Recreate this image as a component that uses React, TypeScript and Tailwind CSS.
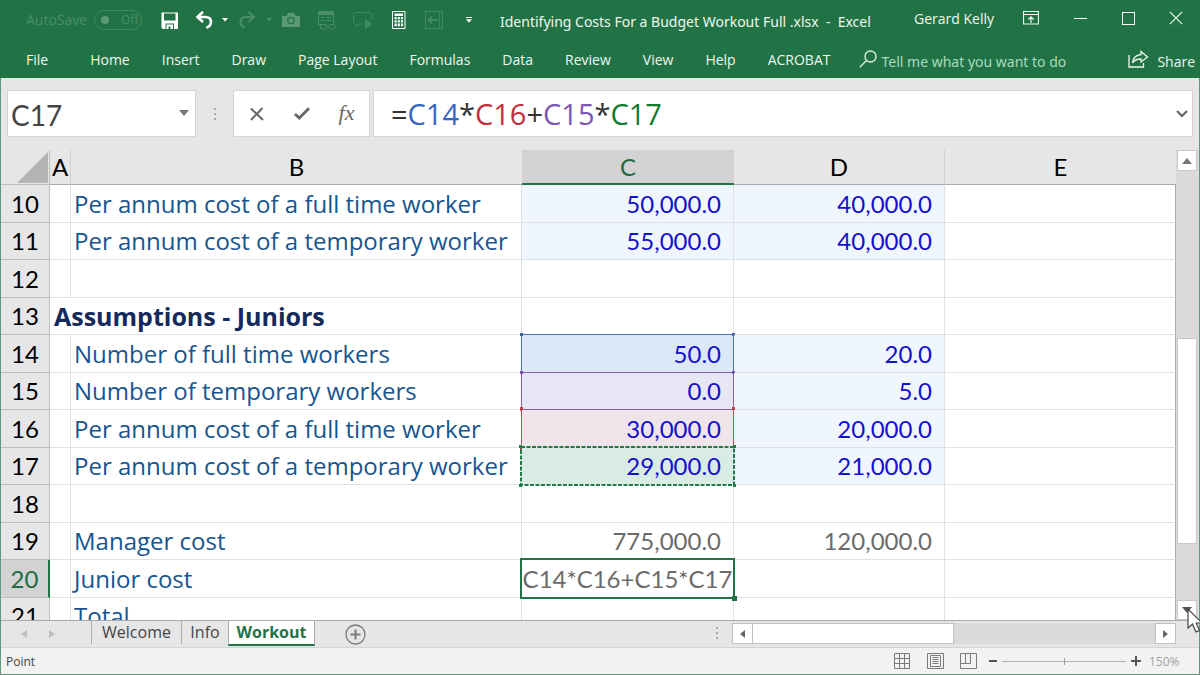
import React from "react";

type Tint = "input" | "blue" | "purple" | "red" | "green";

interface Cell {
  text: string;
  tint?: Tint;
  calculated?: boolean;
  editing?: boolean;
}

interface Row {
  n: number;
  label?: string;
  heading?: boolean;
  c?: Cell;
  d?: Cell;
}

const rows: Row[] = [
  { n: 10, label: "Per annum cost of a full time worker", c: { text: "50,000.0", tint: "input" }, d: { text: "40,000.0", tint: "input" } },
  { n: 11, label: "Per annum cost of a temporary worker", c: { text: "55,000.0", tint: "input" }, d: { text: "40,000.0", tint: "input" } },
  { n: 12 },
  { n: 13, label: "Assumptions - Juniors", heading: true },
  { n: 14, label: "Number of full time workers", c: { text: "50.0", tint: "blue" }, d: { text: "20.0", tint: "input" } },
  { n: 15, label: "Number of temporary workers", c: { text: "0.0", tint: "purple" }, d: { text: "5.0", tint: "input" } },
  { n: 16, label: "Per annum cost of a full time worker", c: { text: "30,000.0", tint: "red" }, d: { text: "20,000.0", tint: "input" } },
  { n: 17, label: "Per annum cost of a temporary worker", c: { text: "29,000.0", tint: "green" }, d: { text: "21,000.0", tint: "input" } },
  { n: 18 },
  { n: 19, label: "Manager cost", c: { text: "775,000.0", calculated: true }, d: { text: "120,000.0", calculated: true } },
  { n: 20, label: "Junior cost", c: { text: "C14*C16+C15*C17", calculated: true, editing: true } },
  { n: 21, label: "Total" },
];

const fills: Record<Tint, string> = {
  input: "bg-[#f0f6fe]",
  blue: "bg-[#dce8f7]",
  purple: "bg-[#e6e6f5]",
  red: "bg-[#eee4ea]",
  green: "bg-[#d9ebe5]",
};

const outlines: Record<Tint, string> = {
  input: "",
  blue: "border border-[#4a72b8]",
  purple: "border border-[#8461ad]",
  red: "border-x border-[#c0504d]",
  green: "z-10",
};

const handles: Record<Tint, string> = {
  input: "",
  blue: "bg-[#3b62a8]",
  purple: "bg-[#7b52a5]",
  red: "bg-[#b8434a]",
  green: "bg-[#1f7a45]",
};

function Outline({ tint }: { tint: Tint }) {
  if (tint === "input") return null;
  const dot = `absolute size-[3px] ${handles[tint]}`;
  return (
    <span className={`pointer-events-none absolute -inset-px ${outlines[tint]}`}>
      {tint === "green" && (
        <svg className="absolute inset-0 h-full w-full overflow-visible" aria-hidden="true">
          <rect width="100%" height="100%" fill="none" stroke="#1f7a45" strokeWidth="2" strokeDasharray="4 1.5" />
        </svg>
      )}
      <span className={`${dot} -left-0.5 -top-0.5`} />
      <span className={`${dot} -right-0.5 -top-0.5`} />
      <span className={`${dot} -bottom-0.5 -left-0.5`} />
      <span className={`${dot} -bottom-0.5 -right-0.5`} />
    </span>
  );
}

function ValueCell({ cell }: { cell?: Cell }) {
  const base = "relative whitespace-nowrap border-b border-r border-[#dfe2e5] p-0 text-right";
  if (!cell) return <td className={base} />;
  const ink = cell.calculated ? "text-[#6b6b6b]" : "text-[#1510cc]";
  const fill = cell.tint ? fills[cell.tint] : "";
  return (
    <td className={`${base} ${ink} ${fill} ${cell.editing ? "" : "pr-3"}`}>
      {cell.editing ? (
        <>
          <span className="pointer-events-none absolute -inset-0.5 z-10 border-2 border-[#217346]">
            <span className="absolute -bottom-1 -right-1 size-[5px] bg-[#217346]" />
          </span>
          <span className="flex justify-center">{cell.text}</span>
        </>
      ) : (
        cell.text
      )}
      {cell.tint && <Outline tint={cell.tint} />}
    </td>
  );
}

function SheetRow({ row }: { row: Row }) {
  const active = row.n === 20;
  return (
    <tr className="h-[38px] even:h-[37px]">
      <th
        scope="row"
        className={`border-b border-[#bfbfbf] p-0 text-center font-normal ${
          active ? "border-r-2 border-r-[#217346] bg-[#d2d2d2] text-[#1f6b41]" : "border-r bg-[#e6e6e6] text-black"
        }`}
      >
        {row.n}
      </th>
      {row.heading ? (
        <td
          colSpan={2}
          className="whitespace-nowrap border-b border-r border-[#dfe2e5] p-0 pl-1 font-['Open_Sans',sans-serif] text-[25px] font-bold text-[#14295c]"
        >
          {row.label}
        </td>
      ) : (
        <>
          <td className="border-b border-r border-[#dfe2e5] p-0" />
          <td className="whitespace-nowrap border-b border-r border-[#dfe2e5] p-0 pl-[3px] font-['Open_Sans',sans-serif] text-[#17558f]">
            {row.label}
          </td>
        </>
      )}
      <ValueCell cell={row.c} />
      <ValueCell cell={row.d} />
      <td className="border-b border-r border-[#dfe2e5] border-r-[#ababab] p-0" />
    </tr>
  );
}

function Caret({ className }: { className: string }) {
  return (
    <svg viewBox="0 0 6 4" className={className} fill="currentColor" aria-hidden="true">
      <path d="M0 0h6L3 3.6z" />
    </svg>
  );
}

function QuickAccess() {
  return (
    <div className="flex items-center text-white">
      <button aria-label="Save" className="flex w-9 justify-center">
        <svg viewBox="0 0 17 17" className="size-[17px]" aria-hidden="true">
          <path d="M.5.5H17v16.500H2L.5 15.500z" fill="currentColor" />
          <path d="M3 1.500h11.500v7H3zM4.500 11.500h8.500V17H4.500z" fill="#217346" />
          <path d="M5.500 12.500h6.500V17H9.500v-2.500h-2V17h-2z" fill="currentColor" />
        </svg>
      </button>
      <button aria-label="Undo" className="flex w-[34px] justify-center">
        <svg viewBox="0 0 18 18" className="size-[18px]" fill="none" stroke="currentColor" strokeWidth="2.600" aria-hidden="true">
          <path d="M8 .8 2.500 6 8 11" />
          <path d="M3 6h7.200c3.600 0 5.800 2 5.800 5 0 2.700-1.500 4.500-4.700 5.700" />
        </svg>
      </button>
      <button aria-label="Undo history" className="flex w-2 justify-center">
        <Caret className="w-1.5" />
      </button>
      <button aria-label="Redo" className="flex w-9 justify-center text-[#4a8d68]">
        <svg viewBox="0 0 18 18" className="size-[18px]" fill="none" stroke="currentColor" strokeWidth="2.200" aria-hidden="true">
          <path d="m10.500 1 5.500 5-5.500 5" />
          <path d="M15.500 6H8.300c-3.600 0-5.800 2-5.800 5 0 2.700 1.500 4.500 4.200 5.700" />
        </svg>
      </button>
      <button aria-label="Redo history" className="flex w-2 justify-center text-[#4a8d68]">
        <Caret className="w-1.5" />
      </button>
      <button aria-label="Camera" className="flex w-9 justify-center text-[#5b9876]">
        <svg viewBox="0 0 18 14" className="w-[18px]" aria-hidden="true">
          <path d="M0 3h4.500L6 0h6l1.500 3H18v11H0z" fill="currentColor" />
          <circle cx="9" cy="7.500" r="3.800" fill="#217346" />
          <circle cx="9" cy="7.500" r="2.500" fill="currentColor" />
        </svg>
      </button>
      <button aria-label="Watch window" className="flex w-9 justify-center text-[#4a8d68]">
        <svg viewBox="0 0 18 19" className="w-[18px]" fill="none" stroke="currentColor" aria-hidden="true">
          <path d="M.5.5h15v12M.5.500v13H3M3 6.500h3M8 6.500h5M3 9.500h3M8 9.500h5" />
          <path d="M1 1h14v2.500H1z" fill="currentColor" />
          <rect x="2.500" y="13.500" width="6" height="4.500" rx="1.500" />
          <rect x="11" y="13.500" width="6" height="4.500" rx="1.500" />
          <path d="M8.500 15H11" />
        </svg>
      </button>
      <button aria-label="Select objects" className="flex w-9 justify-center text-[#438961]">
        <svg viewBox="0 0 20 18" className="w-5" fill="none" stroke="currentColor" aria-hidden="true">
          <path d="M10 13H5.500L3 15.500V13c-1.500 0-2.500-1-2.500-2.500v-6C.5 2.500 1.500 1.500 3 1.500h13c1.500 0 2.500 1 2.500 3V9" />
          <path d="M12.500 8.500v9l6-4.500z" fill="currentColor" />
        </svg>
      </button>
      <button aria-label="Calculator" className="flex w-[35px] justify-center">
        <svg viewBox="0 0 14 18" className="w-3.5" aria-hidden="true">
          <path d="M.5.5h12.500v17H.5z" fill="none" stroke="currentColor" />
          <path
            d="M2.500 2.500H11v2.500H2.500zM2.500 6h2.200v2.200H2.500zM5.700 6h2.200v2.200H5.700zM8.900 6H11v2.200H8.900zM2.500 9.300h2.200v2.200H2.500zM5.700 9.300h2.200v2.200H5.700zM8.900 9.300H11v2.200H8.900zM2.500 12.600h2.200v2.700H2.500zM5.700 12.600h2.200v2.700H5.700zM8.900 12.600H11v2.700H8.900z"
            fill="currentColor"
          />
        </svg>
      </button>
      <button aria-label="Precedents" className="flex w-[35px] justify-center text-[#438961]">
        <svg viewBox="0 0 18 18" className="w-[18px]" fill="none" stroke="currentColor" aria-hidden="true">
          <path d="M.5.500h17v17H.500zM14.500.5v17" />
          <path d="M12.500 9H4M7 5.500 3.500 9 7 12.500" strokeWidth="2" />
        </svg>
      </button>
      <button aria-label="Customize toolbar" className="flex w-[35px] justify-center">
        <svg viewBox="0 0 6 6" className="w-1.5" fill="currentColor" aria-hidden="true">
          <path d="M0 0h6v1H0zM0 2.300h6L3 5.800z" />
        </svg>
      </button>
    </div>
  );
}

function TitleBar() {
  return (
    <div className="flex h-10 items-center">
      <div className="flex w-[151px] shrink-0 items-center gap-1 pl-[26px] text-[#4a8d68]">
        <span className="w-16">AutoSave</span>
        <button
          role="switch"
          aria-checked="false"
          aria-label="AutoSave"
          className="flex h-5 w-12 items-center gap-3 rounded-full border border-[#438961] pl-1.5 text-xs"
        >
          <span className="size-2 rounded-full bg-[#5b9876]" />
          Off
        </button>
      </div>
      <QuickAccess />
      <h1 className="min-w-0 flex-1 whitespace-pre pl-3.5 pt-1 font-['Noto_Sans',sans-serif] font-normal">
        {"Identifying Costs For a Budget Workout Full .xlsx  -  Excel"}
      </h1>
      <button className="mr-2.5 w-[82px] whitespace-nowrap pb-0.5 text-left">Gerard Kelly</button>
      <div className="flex items-center pb-1">
        <button aria-label="Ribbon display options" className="flex w-[50px] justify-center">
          <svg viewBox="0 0 16 14" className="w-4" fill="none" stroke="currentColor" aria-hidden="true">
            <path d="M.5.500h15v12.500H.500zM.5 3.500h15M8 12V6M5.300 8.500 8 5.800l2.700 2.700" strokeWidth="1.200" />
          </svg>
        </button>
        <button aria-label="Minimize" className="flex w-12 justify-center">
          <span className="h-px w-[13px] bg-white" />
        </button>
        <button aria-label="Maximize" className="flex w-12 justify-center">
          <span className="size-[13px] border border-white" />
        </button>
        <button aria-label="Close" className="flex w-12 justify-center">
          <svg viewBox="0 0 14 14" className="w-3.5" stroke="currentColor" strokeWidth="1.200" aria-hidden="true">
            <path d="m.8.8 12.400 12.400M13.200.8.800 13.200" />
          </svg>
        </button>
      </div>
    </div>
  );
}

const ribbonTabs = ["Home", "Insert", "Draw", "Page Layout", "Formulas", "Data", "Review", "View", "Help", "ACROBAT"];

function Ribbon() {
  return (
    <div className="flex h-[38px] items-center whitespace-nowrap pl-[26px] pr-[5px]">
      <button className="mr-[42px] pt-0.5">File</button>
      <nav className="flex gap-8 pt-0.5">
        {ribbonTabs.map((t) => (
          <button key={t}>{t}</button>
        ))}
      </nav>
      <label className="ml-[29px] flex min-w-0 flex-1 items-center gap-1 text-[#a9dabf]">
        <svg viewBox="0 0 18 18" className="size-[18px] shrink-0 text-[#d5ecdf]" fill="none" stroke="currentColor" strokeWidth="1.400" aria-hidden="true">
          <circle cx="11.500" cy="6.500" r="5.500" />
          <path d="M7.500 10.500.8 17.300" />
        </svg>
        <input
          aria-label="Tell me what you want to do"
          placeholder="Tell me what you want to do"
          className="w-full min-w-0 bg-transparent pt-1.5 font-['Noto_Sans',sans-serif] outline-none placeholder:text-[#a9dabf]"
        />
      </label>
      <button className="flex items-center gap-2">
        <svg viewBox="0 0 21 18" className="w-[21px]" fill="none" stroke="currentColor" strokeWidth="1.300" aria-hidden="true">
          <path d="M1 5v12h14.500v-4" />
          <path d="M13 1.500 19.500 7 13 12V9c-4 0-6.500 1-8.500 4 .5-5 3.500-8 8.500-8.500z" />
        </svg>
        <span className="pt-1.5">Share</span>
      </button>
    </div>
  );
}

function Grip() {
  return (
    <span className="flex flex-col gap-[3px]" aria-hidden="true">
      <span className="size-0.5 bg-[#a6a6a6]" />
      <span className="size-0.5 bg-[#a6a6a6]" />
      <span className="size-0.5 bg-[#a6a6a6]" />
    </span>
  );
}

function FormulaBar() {
  return (
    <div className="flex h-[72px] items-start pl-1.5 pr-1.5 pt-3">
      <div className="flex h-[47px] w-[189px] items-center border border-[#d4d4d4] bg-white pl-[3px] pr-1.5">
        <input
          aria-label="Name box"
          defaultValue="C17"
          className="w-full min-w-0 bg-transparent pt-0.5 font-[Lato,sans-serif] text-[28px] text-[#444] outline-none"
        />
        <button aria-label="Open name list" className="text-[#777]">
          <Caret className="w-2.5" />
        </button>
      </div>
      <div className="flex h-[47px] w-[37px] items-center justify-center">
        <Grip />
      </div>
      <div className="mr-[3px] flex h-[47px] w-[137px] items-center border border-[#d4d4d4] bg-white text-[#666]">
        <button aria-label="Cancel" className="flex flex-1 justify-center">
          <svg viewBox="0 0 14 14" className="w-3.5" fill="none" stroke="currentColor" strokeWidth="2" aria-hidden="true">
            <path d="m1 1.500 12 11.500M12.500 1 1 13" />
          </svg>
        </button>
        <button aria-label="Enter" className="flex flex-1 justify-center">
          <svg viewBox="0 0 16 13" className="w-4" fill="none" stroke="currentColor" strokeWidth="2.800" aria-hidden="true">
            <path d="m1 7 4.300 4L15 1.200" />
          </svg>
        </button>
        <button aria-label="Insert function" className="flex-1 pb-0.5 font-[Liberation_Serif,serif] text-[22px] italic">
          fx
        </button>
      </div>
      <div className="flex h-[47px] min-w-0 flex-1 items-center border border-[#d4d4d4] bg-white pl-[17px] pr-1">
        <div
          role="textbox"
          aria-label="Formula"
          contentEditable
          suppressContentEditableWarning
          className="flex-1 whitespace-nowrap text-[29px] leading-[45px] text-[#333] outline-none"
        >
          =<span className="text-[#3566c4]">C14</span>*<span className="text-[#c02f3a]">C16</span>+
          <span className="text-[#7e57b5]">C15</span>*<span className="text-[#0f7a2c]">C17</span>
        </div>
        <button aria-label="Expand formula bar" className="text-[#666]">
          <svg viewBox="0 0 12 8" className="w-3" fill="none" stroke="currentColor" strokeWidth="2.200" aria-hidden="true">
            <path d="m1 1 5 5 5-5" />
          </svg>
        </button>
      </div>
    </div>
  );
}

function Sheet() {
  return (
    <div className="flex min-h-0 flex-1 border-b border-[#ababab]">
      <div className="min-w-0 flex-1 overflow-hidden">
        <table className="w-full table-fixed border-separate border-spacing-0 bg-white font-[Lato,sans-serif] text-2xl leading-8 [font-variant-ligatures:none]">
          <colgroup>
            <col className="w-[49px]" />
            <col className="w-[21px]" />
            <col className="w-[451px]" />
            <col className="w-[212px]" />
            <col className="w-[211px]" />
            <col />
          </colgroup>
          <thead>
            <tr className="h-[35px] bg-[#e6e6e6] text-black">
              <th className="border-b border-r border-[#bfbfbf] p-0">
                <svg viewBox="0 0 31 31" className="ml-4 w-[31px]" aria-label="Select all">
                  <path d="M31 0v31H0z" fill="#b4b4b4" />
                </svg>
              </th>
              <th className="border-b border-r border-b-[#ababab] border-r-[#cfcfcf] p-0 font-normal">A</th>
              <th className="border-b border-b-[#ababab] p-0 font-normal">B</th>
              <th className="border-b-2 border-b-[#217346] bg-[#d2d2d2] p-0 font-normal text-[#1f6b41]">C</th>
              <th className="border-b border-r border-b-[#ababab] border-r-[#cfcfcf] p-0 font-normal">D</th>
              <th className="border-b border-b-[#ababab] p-0 font-normal">E</th>
            </tr>
          </thead>
          <tbody>
            {rows.map((r) => (
              <SheetRow key={r.n} row={r} />
            ))}
          </tbody>
        </table>
      </div>
      <div className="relative flex w-[23px] flex-col bg-[#dadada] pl-px pr-0.5">
        <button aria-label="Scroll up" className="flex h-[21px] items-center justify-center border border-[#c8c8c8] bg-white text-[#777]">
          <svg viewBox="0 0 10 6" className="w-2.5" fill="currentColor" aria-hidden="true">
            <path d="M5 0l5 6H0z" />
          </svg>
        </button>
        <div className="flex-[168]" />
        <div className="flex-[206] border border-[#c8c8c8] bg-white" />
        <div className="flex-[56]" />
        <button aria-label="Scroll down" className="flex h-5 items-center justify-center border border-[#c8c8c8] bg-white text-[#555]">
          <Caret className="w-2.5" />
        </button>
        <svg viewBox="0 0 18 26" className="pointer-events-none absolute -bottom-3.5 -right-1.5 z-20 w-[18px]" aria-hidden="true">
          <path d="M1 1v19l4.500-4 3.500 8 3.500-1.500-3.300-7.500H15z" fill="#fff" stroke="#444" strokeWidth="1.200" />
        </svg>
      </div>
    </div>
  );
}

function SheetTabs() {
  return (
    <div className="flex h-[27px] items-start border-b border-[#d4d4d4] text-base leading-[23px] text-[#444]">
      <div className="flex h-[23px] w-[91px] items-center gap-[22px] border-r border-[#ababab] pl-5 pt-0.5 text-[#bdbdbd]">
        <button aria-label="Previous sheet">
          <svg viewBox="0 0 6 8" className="w-1.5" fill="currentColor" aria-hidden="true">
            <path d="M6 0v8L0 4z" />
          </svg>
        </button>
        <button aria-label="Next sheet">
          <svg viewBox="0 0 6 8" className="w-1.5" fill="currentColor" aria-hidden="true">
            <path d="M0 0v8l6-4z" />
          </svg>
        </button>
      </div>
      <button className="h-[23px] w-[90px] border-r border-[#ababab]">Welcome</button>
      <button className="h-[23px] w-[46px]">Info</button>
      <button className="h-[25px] w-[87px] border-x border-b-2 border-x-[#ababab] border-b-[#217346] bg-white font-bold text-[#217346]">
        Workout
      </button>
      <button aria-label="New sheet" className="ml-[30px] mt-[3px]">
        <svg viewBox="0 0 21 21" className="w-[21px]" fill="none" stroke="#7a7a7a" aria-hidden="true">
          <circle cx="10.500" cy="10.500" r="9.500" strokeWidth="1.300" />
          <path d="M10.500 5.500v10M5.500 10.500h10" strokeWidth="2" />
        </svg>
      </button>
      <div className="min-w-0 flex-1" />
      <div className="mr-3.5 mt-1.5">
        <Grip />
      </div>
      <div className="mr-[23px] mt-0.5 flex h-[21px] w-[444px] bg-[#dadada]">
        <button aria-label="Scroll left" className="flex w-[21px] items-center justify-center border border-[#c0c0c0] bg-white text-[#666]">
          <svg viewBox="0 0 5 8" className="w-[5px]" fill="currentColor" aria-hidden="true">
            <path d="M5 0v8L0 4z" />
          </svg>
        </button>
        <div className="w-[201px] border border-l-0 border-[#c0c0c0] bg-white" />
        <div className="flex-1" />
        <button aria-label="Scroll right" className="flex w-[21px] items-center justify-center border border-[#c0c0c0] bg-white text-[#666]">
          <svg viewBox="0 0 5 8" className="w-[5px]" fill="currentColor" aria-hidden="true">
            <path d="M0 0v8l5-4z" />
          </svg>
        </button>
      </div>
    </div>
  );
}

function StatusBar() {
  return (
    <div className="flex h-[26px] items-center bg-[#f2f2f2] pl-[5px] pr-4 text-xs text-[#444]">
      <span className="flex-1 pt-0.5">Point</span>
      <div className="mr-3 flex gap-4 text-[#7a7a7a]">
        <button aria-label="Normal view">
          <svg viewBox="0 0 17 17" className="w-[17px]" fill="none" stroke="currentColor" aria-hidden="true">
            <path d="M.5.500h15v15H.500zM5.500.5v15M10.500.5v15M.5 5.500h15M.5 10.500h15" />
          </svg>
        </button>
        <button aria-label="Page layout view">
          <svg viewBox="0 0 17 17" className="w-[17px]" fill="none" stroke="currentColor" aria-hidden="true">
            <path d="M.5.500h16v15H.500zM3.500 2.500h10v11h-10zM5.500 4.500h6M5.500 6.500h6M5.500 8.500h6M5.500 10.500h6" />
          </svg>
        </button>
        <button aria-label="Page break view">
          <svg viewBox="0 0 17 17" className="w-[17px]" fill="none" stroke="currentColor" aria-hidden="true">
            <path d="M.5.500h16v15H.500zM5.500.5v10M10.500.5v10M.5 10.500h10" />
          </svg>
        </button>
      </div>
      <button aria-label="Zoom out" className="h-0.5 w-2 bg-[#555]" />
      <input
        type="range"
        aria-label="Zoom"
        defaultValue={50}
        className="mx-[5px] h-[7px] w-[124px] appearance-none bg-transparent [&::-webkit-slider-runnable-track]:h-px [&::-webkit-slider-runnable-track]:bg-[#b0b0b0] [&::-webkit-slider-thumb]:-mt-[3px] [&::-webkit-slider-thumb]:h-[7px] [&::-webkit-slider-thumb]:w-px [&::-webkit-slider-thumb]:appearance-none [&::-webkit-slider-thumb]:bg-[#a0a0a0]"
      />
      <button aria-label="Zoom in" className="mr-2 text-[#555]">
        <svg viewBox="0 0 10 10" className="w-2.5" stroke="currentColor" strokeWidth="2" aria-hidden="true">
          <path d="M5 0v10M0 5h10" />
        </svg>
      </button>
      <button className="w-[34px] pt-0.5 text-left text-[#a3a3a3]">150%</button>
    </div>
  );
}

export default function App() {
  return (
    <div className="flex h-screen flex-col overflow-hidden bg-[#e6e6e6] font-['Open_Sans',sans-serif] text-sm">
      <header className="shrink-0 bg-[#217346] text-[#eef7f1]">
        <TitleBar />
        <Ribbon />
      </header>
      <main className="flex min-h-0 flex-1 flex-col border-x border-b border-[#5f9a79]">
        <FormulaBar />
        <Sheet />
        <SheetTabs />
        <StatusBar />
      </main>
    </div>
  );
}
